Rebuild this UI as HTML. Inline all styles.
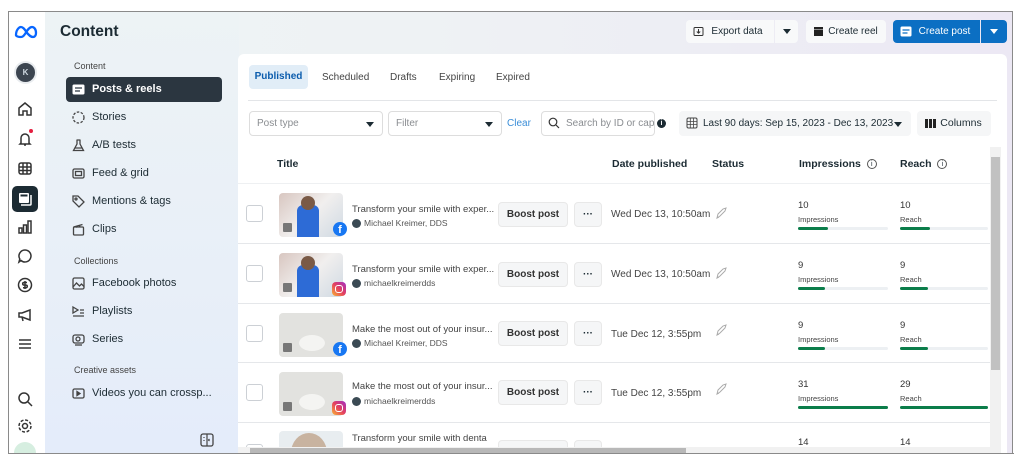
<!DOCTYPE html>
<html><head><meta charset="utf-8">
<style>
*{box-sizing:border-box;margin:0;padding:0}
body{width:1024px;height:465px;background:#fff;font-family:"Liberation Sans",sans-serif;position:relative;overflow:hidden;color:#1c2b33}
.a{position:absolute}
#frame{left:8px;top:11px;width:1005px;height:443px;border:1px solid #8a8a8a;overflow:hidden;background:linear-gradient(90deg,#eef4f6 0%,#eef2f4 40%,#ece8f4 100%)}
#rail{left:0;top:0;width:36px;height:443px;background:#fff}
#side{left:36px;top:0;width:194px;height:443px;background:linear-gradient(180deg,#edf3f5 0%,#e8eff8 60%,#e4ecfa 100%)}
.ri{position:absolute;left:8px;width:18px;height:18px}
.ri svg{width:18px;height:18px;fill:none;stroke:#333;stroke-width:1.5}
.lbl{position:absolute;left:66px;font-size:9px;color:#444}
.it{position:absolute;left:66px;width:156px;height:25px;font-size:11px;color:#1c2b33;line-height:25px;padding-left:26px}
.it svg{position:absolute;left:6px;top:6px;width:13px;height:13px;fill:none;stroke:#444;stroke-width:1.3}
#panel{left:238px;top:54px;width:769px;height:400px;background:#fff;border-radius:6px 6px 0 0}
.btn{position:absolute;background:#f5f6f7;border-radius:4px;font-size:10px;text-align:center;line-height:23px;color:#1c2b33}
.inp{position:absolute;border:1px solid #ddd;border-radius:4px;background:#fff;font-size:10px;color:#8a8d91;line-height:23px;padding-left:7px}
.car{position:absolute;right:8px;top:10px;border-left:4px solid transparent;border-right:4px solid transparent;border-top:5px solid #1c2b33}
.th{position:absolute;top:158px;font-size:10.5px;font-weight:bold;color:#1c2b33}
.row{position:absolute;left:238px;width:752px;height:60px;border-top:1px solid #e5e7ea;background:#fff}
.cb{position:absolute;left:8px;width:17px;height:17px;border:1px solid #ccd0d5;border-radius:3px;background:#fff}
.th1{position:absolute;left:41px;width:64px;height:44px;border-radius:4px;overflow:hidden;background:#e8ecee}
.t1{position:absolute;left:114px;font-size:9.5px;color:#444}
.t2{position:absolute;left:114px;font-size:8.5px;color:#555;padding-left:12px}
.t2:before{content:"";position:absolute;left:0;top:1px;width:9px;height:9px;border-radius:50%;background:#3b4a54}
.bp{position:absolute;left:260px;width:70px;height:25px;background:#f5f6f7;border:1px solid #e8e8e8;border-radius:4px;font-size:10px;font-weight:bold;text-align:center;line-height:23px;color:#333}
.mo{position:absolute;left:336px;width:28px;height:25px;background:#f5f6f7;border:1px solid #e8e8e8;border-radius:4px;font-size:10px;text-align:center;line-height:23px;font-weight:bold}
.dt{position:absolute;left:373px;font-size:10px;color:#444}
.rk{position:absolute;left:476px;width:14px;height:14px}
.n{position:absolute;font-size:9.5px;color:#333}
.nl{position:absolute;font-size:7.5px;color:#444}
.bar{position:absolute;height:3px;background:#edf0f3;border-radius:2px}
.bar i{position:absolute;left:0;top:0;height:3px;background:#0b7d4a;border-radius:2px}
.badge{position:absolute;width:14px;height:14px;border-radius:50%}
</style></head><body>
<div id="frame" class="a">
 <div id="rail" class="a"></div>
 <div id="side" class="a"></div>
</div>

<svg class="a" style="left:14px;top:25px" width="24" height="14" viewBox="0 0 24 14"><path d="M2 10c0-5 3-8 5-8 3 0 5 5 7 7 2 2 3 3 5 3s3-2 3-4c0-4-2-6-4-6-3 0-5 4-7 7-2 3-3 3-5 3s-4-1-4-2z" fill="none" stroke="#0866ff" stroke-width="2.3"/></svg>
<div class="a" style="left:14px;top:61px;width:23px;height:23px;border-radius:50%;background:#3c4550;border:2px solid #e9ecef;color:#cfd8e0;font-size:8px;font-weight:bold;text-align:center;line-height:19px">K</div>
<div class="ri a" style="left:16px;top:100px"><svg viewBox="0 0 18 18"><path d="M3 8l6-5 6 5v7h-4v-4H7v4H3z"/></svg></div>
<div class="ri a" style="left:16px;top:130px"><svg viewBox="0 0 18 18"><path d="M5 13V8a4 4 0 018 0v5l1 1H4z M8 15h2"/></svg></div>
<div class="a" style="left:29px;top:129px;width:4px;height:4px;border-radius:50%;background:#e41e3f"></div>
<div class="ri a" style="left:16px;top:159px"><svg viewBox="0 0 18 18"><rect x="3" y="4" width="12" height="11" rx="2"/><path d="M3 8h12M3 11.5h12M7 4v11M11 4v11"/></svg></div>
<div class="a" style="left:12px;top:186px;width:26px;height:26px;border-radius:5px;background:#1c2b33"></div>
<svg class="a" style="left:17px;top:191px" width="16" height="16" viewBox="0 0 16 16"><rect x="2" y="2" width="10" height="10" rx="1" fill="#fff"/><path d="M4 14h9a1 1 0 001-1V4" stroke="#fff" stroke-width="1.5" fill="none"/><rect x="3.5" y="3.5" width="7" height="2" fill="#1c2b33"/></svg>
<div class="ri a" style="left:16px;top:218px"><svg viewBox="0 0 18 18"><rect x="3" y="10" width="3" height="5"/><rect x="7.5" y="7" width="3" height="8"/><rect x="12" y="3" width="3" height="12"/></svg></div>
<div class="ri a" style="left:16px;top:247px"><svg viewBox="0 0 18 18"><path d="M9 3a6 6 0 11-4 10.5L3 15l.8-3A6 6 0 019 3z"/></svg></div>
<div class="ri a" style="left:16px;top:276px"><svg viewBox="0 0 18 18"><circle cx="9" cy="9" r="6.5"/><path d="M11 6.5H8a1.3 1.3 0 000 2.6h2a1.3 1.3 0 010 2.6H7M9 5v8"/></svg></div>
<div class="ri a" style="left:16px;top:306px"><svg viewBox="0 0 18 18"><path d="M3 7h3l8-3v10l-8-3H3z M6 11l1 4"/></svg></div>
<div class="ri a" style="left:16px;top:335px"><svg viewBox="0 0 18 18"><path d="M3 5h12M3 9h12M3 13h12"/></svg></div>
<div class="ri a" style="left:16px;top:390px"><svg viewBox="0 0 18 18"><circle cx="8" cy="8" r="5"/><path d="M12 12l4 4"/></svg></div>
<div class="ri a" style="left:16px;top:417px"><svg viewBox="0 0 18 18"><circle cx="9" cy="9" r="2.5"/><circle cx="9" cy="9" r="6" stroke-dasharray="3 1.7"/></svg></div>
<div class="a" style="left:14px;top:442px;width:22px;height:12px;border-radius:11px 11px 0 0;background:#d6eee0"></div>

<div class="a" style="left:60px;top:23px;font-size:15.5px;font-weight:bold">Content</div>
<div class="lbl" style="top:61px;left:74px">Content</div>
<div class="it" style="top:77px;background:#2b3640;color:#fff;border-radius:4px;font-weight:bold"><svg viewBox="0 0 13 13" style="stroke:none"><rect x="0.5" y="1.5" width="12" height="10" rx="1.5" fill="#fff"/><path d="M3 5h7M3 8h5" stroke="#2b3640" stroke-width="1.3"/></svg>Posts &amp; reels</div>
<div class="it" style="top:105px"><svg viewBox="0 0 13 13"><circle cx="6.5" cy="6.5" r="5.5" stroke-dasharray="2.5 1.5"/></svg>Stories</div>
<div class="it" style="top:133px"><svg viewBox="0 0 13 13"><path d="M4.5 1h4M5 1v4L1.5 11.5h10L8 5V1M3 9h7"/></svg>A/B tests</div>
<div class="it" style="top:161px"><svg viewBox="0 0 13 13"><rect x="1" y="2" width="11" height="9" rx="1.5"/><rect x="3.5" y="4.5" width="6" height="4"/></svg>Feed &amp; grid</div>
<div class="it" style="top:189px"><svg viewBox="0 0 13 13"><path d="M1 1h5l6 6-5 5-6-6z"/><circle cx="4" cy="4" r="1"/></svg>Mentions &amp; tags</div>
<div class="it" style="top:217px"><svg viewBox="0 0 13 13"><rect x="1.5" y="4" width="10" height="8" rx="1"/><path d="M1.5 4l9-2.5M4 3l1 1.5M7 2.2l1 1.5"/></svg>Clips</div>
<div class="lbl" style="top:256px;left:74px">Collections</div>
<div class="it" style="top:271px"><svg viewBox="0 0 13 13"><rect x="1" y="1" width="11" height="11" rx="1.5"/><path d="M1 10l3.5-4 3 3 2-2 2.5 2.5"/></svg>Facebook photos</div>
<div class="it" style="top:299px"><svg viewBox="0 0 13 13"><path d="M1 2l5 3-5 3zM8 5h4M1 11h11M8 8h4"/></svg>Playlists</div>
<div class="it" style="top:327px"><svg viewBox="0 0 13 13"><rect x="1" y="2" width="11" height="8" rx="2"/><circle cx="6" cy="6" r="2"/><path d="M3 12h7"/></svg>Series</div>
<div class="lbl" style="top:365px;left:74px">Creative assets</div>
<div class="it" style="top:381px"><svg viewBox="0 0 13 13"><rect x="1" y="2" width="11" height="9" rx="1.5"/><path d="M5 4.5l3 2-3 2z" fill="#444"/></svg>Videos you can crossp...</div>
<svg class="a" style="left:200px;top:433px" width="14" height="14" viewBox="0 0 14 14"><rect x="1" y="1" width="12" height="12" rx="2" fill="none" stroke="#444" stroke-width="1.3"/><path d="M7 1v12M4 4v1M4 7v1M9.5 6l-1 1 1 1" stroke="#444" stroke-width="1.2" fill="none"/></svg>

<div class="btn" style="left:686px;top:20px;width:88px;height:23px;background:#f8f9fa;padding-left:14px;border-radius:4px 0 0 4px">Export data</div>
<svg class="a" style="left:693px;top:26px" width="11" height="11" viewBox="0 0 11 11"><rect x="1" y="1.5" width="9" height="8" rx="1" fill="none" stroke="#333"/><path d="M5.5 3v4M3.8 5.5l1.7 1.7 1.7-1.7" stroke="#333" fill="none"/></svg>
<div class="btn" style="left:775px;top:20px;width:23px;height:23px;background:#f8f9fa;border-radius:0 4px 4px 0"><div class="car" style="right:7px;top:9px"></div></div>
<div class="btn" style="left:806px;top:20px;width:80px;height:23px;background:#f8f9fa;padding-left:14px">Create reel</div>
<svg class="a" style="left:813px;top:26px" width="11" height="11" viewBox="0 0 11 11"><rect x="1" y="3.5" width="9" height="6.5" fill="#222"/><rect x="1" y="1" width="9" height="2" fill="#222"/></svg>
<div class="btn" style="left:893px;top:20px;width:87px;height:23px;background:#0b6fc3;color:#fff;padding-left:16px;border-radius:4px 0 0 4px">Create post</div>
<svg class="a" style="left:900px;top:26px" width="12" height="11" viewBox="0 0 12 11"><rect x="0.5" y="0.5" width="11" height="10" rx="1.5" fill="#fff"/><path d="M2.5 4h7M2.5 7h5" stroke="#0b6fc3" stroke-width="1.3"/></svg>
<div class="btn" style="left:981px;top:20px;width:26px;height:23px;background:#0b6fc3;border-radius:0 4px 4px 0"><div class="car" style="right:9px;top:9px;border-top-color:#fff"></div></div>

<div id="panel" class="a"></div>
<div class="a" style="left:249px;top:65px;width:59px;height:24px;background:#e1edf7;border-radius:4px;font-size:10px;font-weight:bold;color:#0b5cad;text-align:center;line-height:24px">Published</div>
<div class="a" style="left:322px;top:72px;font-size:10px;color:#444">Scheduled</div>
<div class="a" style="left:390px;top:72px;font-size:10px;color:#444">Drafts</div>
<div class="a" style="left:439px;top:72px;font-size:10px;color:#444">Expiring</div>
<div class="a" style="left:496px;top:72px;font-size:10px;color:#444">Expired</div>
<div class="a" style="left:248px;top:100px;width:749px;height:1px;background:#e3e5e8"></div>
<div class="inp" style="left:249px;top:111px;width:134px;height:25px">Post type<div class="car"></div></div>
<div class="inp" style="left:388px;top:111px;width:114px;height:25px">Filter<div class="car"></div></div>
<div class="a" style="left:507px;top:118px;font-size:10px;color:#3b8ed8">Clear</div>
<div class="inp" style="left:541px;top:111px;width:114px;height:25px;padding-left:24px;overflow:hidden;white-space:nowrap">Search by ID or cap</div>
<svg class="a" style="left:548px;top:117px" width="12" height="12" viewBox="0 0 12 12"><circle cx="5" cy="5" r="3.8" fill="none" stroke="#333" stroke-width="1.2"/><path d="M8 8l3 3" stroke="#333" stroke-width="1.2"/></svg>
<div class="a" style="left:657px;top:119px;width:9px;height:9px;border-radius:50%;background:#1c2b33;color:#fff;font-size:7px;text-align:center;line-height:9px;font-weight:bold">i</div>
<div class="btn" style="left:679px;top:111px;width:232px;height:25px;line-height:25px;font-size:10px;text-align:left;padding-left:24px;white-space:nowrap">Last 90 days: Sep 15, 2023 - Dec 13, 2023<div class="car" style="top:11px;right:9px"></div></div>
<svg class="a" style="left:686px;top:117px" width="12" height="12" viewBox="0 0 12 12"><rect x="1" y="1" width="10" height="10" rx="1.5" fill="none" stroke="#444"/><path d="M1 4.5h10M1 7.5h10M4.3 1v10M7.6 1v10" stroke="#444" stroke-width=".8"/></svg>
<div class="btn" style="left:917px;top:111px;width:74px;height:25px;line-height:25px;font-size:10.5px;padding-left:14px">Columns</div>
<svg class="a" style="left:925px;top:119px" width="11" height="9" viewBox="0 0 11 9"><rect x="0" y="0" width="3" height="9" fill="#222"/><rect x="4" y="0" width="3" height="9" fill="#222"/><rect x="8" y="0" width="3" height="9" fill="#222"/></svg>

<div class="th" style="left:277px">Title</div>
<div class="th" style="left:612px">Date published</div>
<div class="th" style="left:712px">Status</div>
<div class="th" style="left:799px">Impressions <span style="display:inline-block;width:10px;height:10px;border:1px solid #555;border-radius:50%;font-size:7px;font-weight:normal;text-align:center;line-height:9px;margin-left:3px;vertical-align:1px">i</span></div>
<div class="th" style="left:900px">Reach <span style="display:inline-block;width:10px;height:10px;border:1px solid #555;border-radius:50%;font-size:7px;font-weight:normal;text-align:center;line-height:9px;margin-left:3px;vertical-align:1px">i</span></div>

<div class="row" style="top:183px;border-top-color:#eef0f2">
 <div class="cb" style="top:21px"></div>
 <div class="th1" style="top:9px;background:linear-gradient(135deg,#d8c6c0,#f1efee 50%,#cfd9e3)"><div class="a" style="left:18px;top:12px;width:22px;height:32px;background:#2d6bd6;border-radius:6px 6px 0 0"></div><div class="a" style="left:22px;top:3px;width:14px;height:14px;border-radius:50%;background:#7a5a46"></div><div class="a" style="left:4px;top:30px;width:9px;height:9px;background:#777;border-radius:1px"></div></div>
 <div class="badge" style="left:95px;top:38px;background:#1877f2;color:#fff;font-size:11px;font-weight:bold;text-align:center;line-height:16px">f</div>
 <div class="t1" style="top:20px">Transform your smile with exper...</div>
 <div class="t2" style="top:34px">Michael Kreimer, DDS</div>
 <div class="bp" style="top:18px">Boost post</div><div class="mo" style="top:18px">···</div>
 <div class="dt" style="top:25px">Wed Dec 13, 10:50am</div>
 <svg class="rk" style="top:23px" viewBox="0 0 14 14"><path d="M3 11l1-4 5-5 3-1-1 3-5 5zM3 11l2-1" fill="none" stroke="#aaa"/></svg>
 <div class="n" style="left:560px;top:16px">10</div><div class="nl" style="left:560px;top:31px">Impressions</div><div class="bar" style="left:560px;top:43px;width:90px"><i style="width:30px"></i></div>
 <div class="n" style="left:662px;top:16px">10</div><div class="nl" style="left:662px;top:31px">Reach</div><div class="bar" style="left:662px;top:43px;width:88px"><i style="width:30px"></i></div>
</div>
<div class="row" style="top:243px">
 <div class="cb" style="top:21px"></div>
 <div class="th1" style="top:9px;background:linear-gradient(135deg,#d8c6c0,#f1efee 50%,#cfd9e3)"><div class="a" style="left:18px;top:12px;width:22px;height:32px;background:#2d6bd6;border-radius:6px 6px 0 0"></div><div class="a" style="left:22px;top:3px;width:14px;height:14px;border-radius:50%;background:#7a5a46"></div><div class="a" style="left:4px;top:30px;width:9px;height:9px;background:#777;border-radius:1px"></div></div>
 <div class="badge" style="left:94px;top:38px;border-radius:4px;background:linear-gradient(45deg,#f9b233,#e4405f,#a02fc7)"><div class="a" style="left:3px;top:3px;width:8px;height:8px;border:1.3px solid #fff;border-radius:3px"></div></div>
 <div class="t1" style="top:20px">Transform your smile with exper...</div>
 <div class="t2" style="top:34px">michaelkreimerdds</div>
 <div class="bp" style="top:18px">Boost post</div><div class="mo" style="top:18px">···</div>
 <div class="dt" style="top:25px">Wed Dec 13, 10:50am</div>
 <svg class="rk" style="top:23px" viewBox="0 0 14 14"><path d="M3 11l1-4 5-5 3-1-1 3-5 5zM3 11l2-1" fill="none" stroke="#aaa"/></svg>
 <div class="n" style="left:560px;top:16px">9</div><div class="nl" style="left:560px;top:31px">Impressions</div><div class="bar" style="left:560px;top:43px;width:90px"><i style="width:27px"></i></div>
 <div class="n" style="left:662px;top:16px">9</div><div class="nl" style="left:662px;top:31px">Reach</div><div class="bar" style="left:662px;top:43px;width:88px"><i style="width:28px"></i></div>
</div>
<div class="row" style="top:303px">
 <div class="cb" style="top:21px"></div>
 <div class="th1" style="top:9px;background:#e2e2df"><div class="a" style="left:20px;top:22px;width:26px;height:16px;border-radius:50%;background:#f4f4f2"></div><div class="a" style="left:4px;top:30px;width:9px;height:9px;background:#777;border-radius:1px"></div></div>
 <div class="badge" style="left:95px;top:38px;background:#1877f2;color:#fff;font-size:11px;font-weight:bold;text-align:center;line-height:16px">f</div>
 <div class="t1" style="top:20px">Make the most out of your insur...</div>
 <div class="t2" style="top:34px">Michael Kreimer, DDS</div>
 <div class="bp" style="top:17px">Boost post</div><div class="mo" style="top:17px">···</div>
 <div class="dt" style="top:25px">Tue Dec 12, 3:55pm</div>
 <svg class="rk" style="top:20px" viewBox="0 0 14 14"><path d="M3 11l1-4 5-5 3-1-1 3-5 5zM3 11l2-1" fill="none" stroke="#aaa"/></svg>
 <div class="n" style="left:560px;top:16px">9</div><div class="nl" style="left:560px;top:31px">Impressions</div><div class="bar" style="left:560px;top:43px;width:90px"><i style="width:27px"></i></div>
 <div class="n" style="left:662px;top:16px">9</div><div class="nl" style="left:662px;top:31px">Reach</div><div class="bar" style="left:662px;top:43px;width:88px"><i style="width:28px"></i></div>
</div>
<div class="row" style="top:362px">
 <div class="cb" style="top:21px"></div>
 <div class="th1" style="top:9px;background:#e2e2df"><div class="a" style="left:20px;top:22px;width:26px;height:16px;border-radius:50%;background:#f4f4f2"></div><div class="a" style="left:4px;top:30px;width:9px;height:9px;background:#777;border-radius:1px"></div></div>
 <div class="badge" style="left:94px;top:38px;border-radius:4px;background:linear-gradient(45deg,#f9b233,#e4405f,#a02fc7)"><div class="a" style="left:3px;top:3px;width:8px;height:8px;border:1.3px solid #fff;border-radius:3px"></div></div>
 <div class="t1" style="top:18px">Make the most out of your insur...</div>
 <div class="t2" style="top:33px">michaelkreimerdds</div>
 <div class="bp" style="top:17px">Boost post</div><div class="mo" style="top:17px">···</div>
 <div class="dt" style="top:25px">Tue Dec 12, 3:55pm</div>
 <svg class="rk" style="top:20px" viewBox="0 0 14 14"><path d="M3 11l1-4 5-5 3-1-1 3-5 5zM3 11l2-1" fill="none" stroke="#aaa"/></svg>
 <div class="n" style="left:560px;top:16px">31</div><div class="nl" style="left:560px;top:31px">Impressions</div><div class="bar" style="left:560px;top:43px;width:90px"><i style="width:90px"></i></div>
 <div class="n" style="left:662px;top:16px">29</div><div class="nl" style="left:662px;top:31px">Reach</div><div class="bar" style="left:662px;top:43px;width:88px"><i style="width:88px"></i></div>
</div>
<div class="row" style="top:422px;height:25px;overflow:hidden">
 <div class="cb" style="top:21px"></div>
 <div class="th1" style="top:8px;background:#e8edf0"><div class="a" style="left:12px;top:2px;width:36px;height:40px;border-radius:50%;background:#c8b3a0"></div></div>
 <div class="t1" style="top:10px">Transform your smile with denta</div>
 <div class="bp" style="top:17px"></div><div class="mo" style="top:17px"></div>
 <div class="n" style="left:560px;top:14px">14</div>
 <div class="n" style="left:662px;top:14px">14</div>
</div>

<div class="a" style="left:990px;top:147px;width:11px;height:300px;background:#f1f1f1"></div>
<div class="a" style="left:991px;top:157px;width:9px;height:213px;background:#c1c1c1"></div>
<div class="a" style="left:238px;top:447px;width:763px;height:6px;background:#f1f1f1"></div>
<div class="a" style="left:250px;top:448px;width:436px;height:5px;background:#b8b8b8"></div>
<div class="a" style="left:8px;top:453px;width:1006px;height:1px;background:#8a8a8a"></div>
</body></html>
